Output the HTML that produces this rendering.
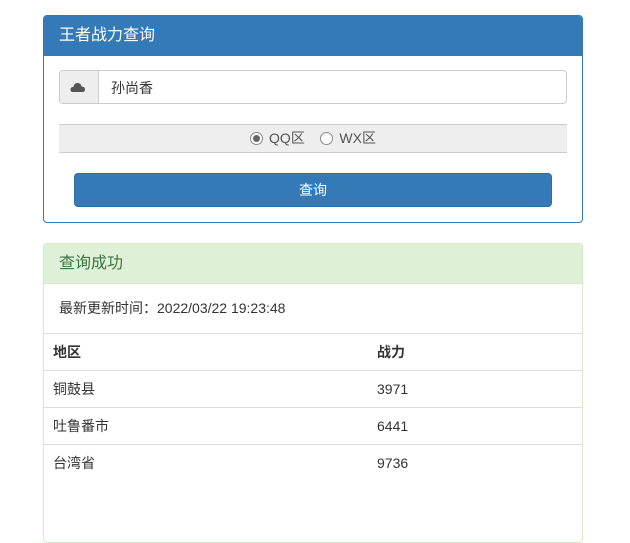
<!DOCTYPE html>
<html><head><meta charset="utf-8"><style>
*{box-sizing:border-box;margin:0;padding:0}
html,body{width:630px;height:481px;overflow:hidden}
body{background:#fff;font-family:"Liberation Sans","Noto Sans CJK SC",sans-serif;font-size:14px;color:#333}
.p1{position:absolute;left:43px;top:15px;width:540px;height:208px;border:1px solid #337ab7;border-radius:4px;overflow:hidden}
.h1{background:#337ab7;color:#fff;height:40px;line-height:39px;padding-left:15px;font-size:16px}
.inp{position:absolute;left:15px;top:54px;width:508px;height:34px;border:1px solid #ccc;border-radius:4px;overflow:hidden}
.ad{position:absolute;left:0;top:0;width:39px;height:32px;background:#eee;border-right:1px solid #ccc}
.inp span{position:absolute;left:51px;top:7px}
.rb{position:absolute;left:15px;top:108px;width:508px;height:29px;background:#eee;border-top:1px solid #ccc;border-bottom:1px solid #ccc;text-align:center;line-height:27px;color:#555}
.r{display:inline-block;width:13px;height:13px;border:1px solid #888;border-radius:50%;vertical-align:-2px;margin-right:6px;background:#fff;position:relative}
.r.on::after{content:"";position:absolute;left:2px;top:2px;width:7px;height:7px;border-radius:50%;background:#666}
.btn{position:absolute;left:30px;top:157px;width:478px;height:34px;background:#337ab7;border:1px solid #2e6da4;border-radius:4px;color:#fff;text-align:center;line-height:32px}
.p2{position:absolute;left:43px;top:243px;width:540px;height:300px;border:1px solid #d6e9c6;border-radius:4px;overflow:hidden}
.h2{background:#dff0d8;color:#3c763d;height:40px;line-height:39px;padding-left:15px;font-size:16px;border-bottom:1px solid #d6e9c6}
.t{height:49px;line-height:49px;padding-left:15px}
.row{position:relative;height:37px;border-top:1px solid #ddd;line-height:36px;padding-left:9px}
.row b{font-weight:bold}
.c2{position:absolute;left:333px;top:0}
</style></head><body>
<div class="p1"><div class="h1">王者战力查询</div>
<div class="inp"><div class="ad"><svg width="39" height="32"><path d="M12.5 21 Q10.5 21 10.5 18.5 Q10.5 16 13.5 16 Q14 12 17.5 12 Q21 12 21.5 15.5 Q25 15.5 25 18.5 Q25 21 22.5 21 Z" fill="#555"/></svg></div><span>孙尚香</span></div>
<div class="rb"><span class="r on"></span>QQ区&nbsp;&nbsp;&nbsp;&nbsp;<span class="r"></span>WX区</div>
<div class="btn">查询</div></div>
<div class="p2"><div class="h2">查询成功</div>
<div class="t">最新更新时间：2022/03/22 19:23:48</div>
<div class="row"><b>地区</b><b class="c2">战力</b></div>
<div class="row">铜鼓县<span class="c2">3971</span></div>
<div class="row">吐鲁番市<span class="c2">6441</span></div>
<div class="row">台湾省<span class="c2">9736</span></div>
</div>
</body></html>
